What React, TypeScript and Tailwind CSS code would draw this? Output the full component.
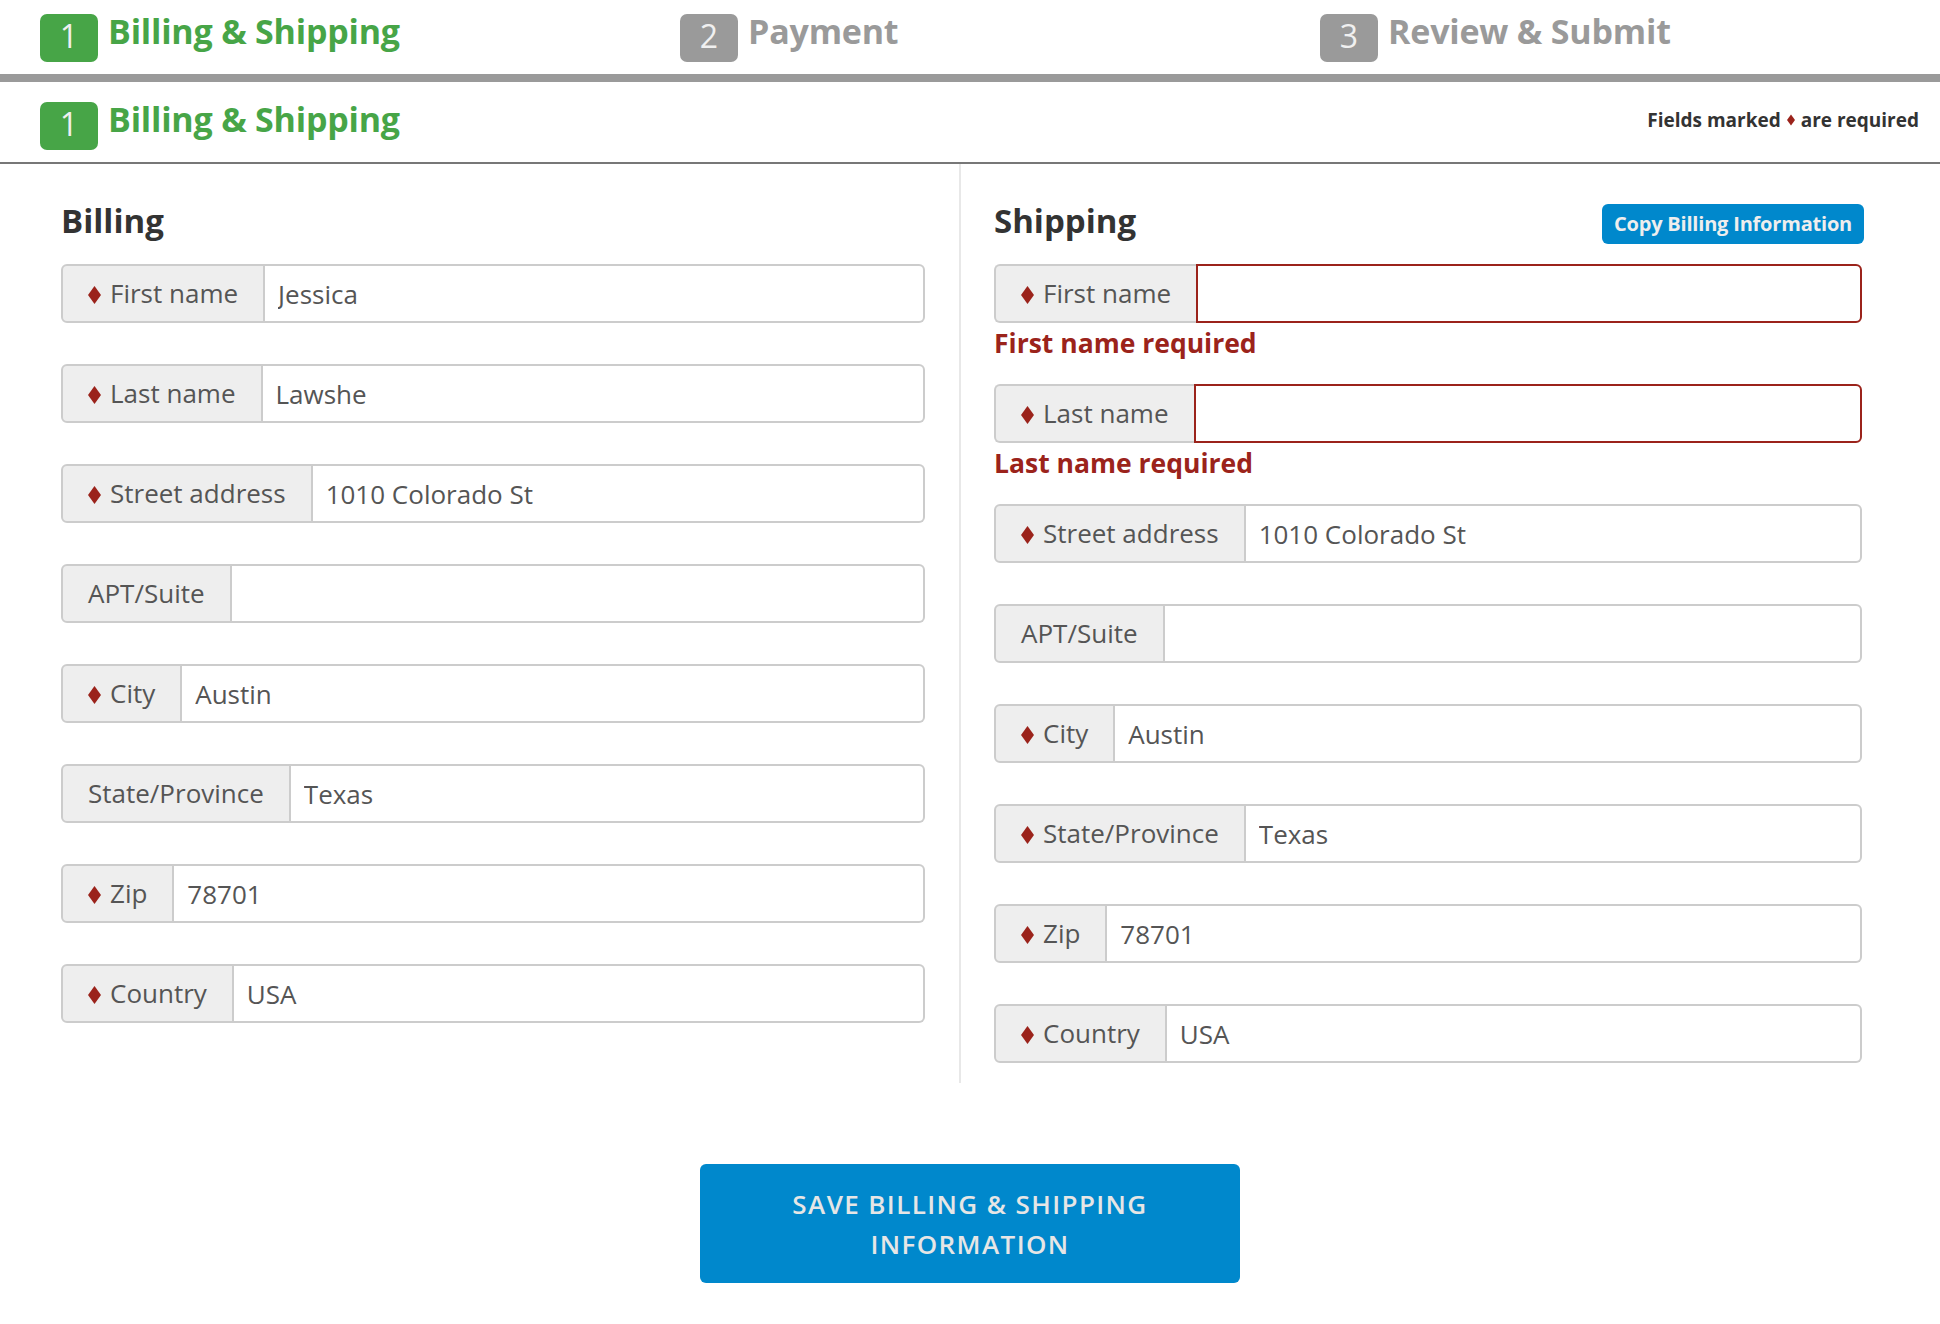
import React from "react";

type Field = { label: string; req: boolean; value: string; error?: string };

const billing: Field[] = [
  { label: "First name", req: true, value: "Jessica" },
  { label: "Last name", req: true, value: "Lawshe" },
  { label: "Street address", req: true, value: "1010 Colorado St" },
  { label: "APT/Suite", req: false, value: "" },
  { label: "City", req: true, value: "Austin" },
  { label: "State/Province", req: false, value: "Texas" },
  { label: "Zip", req: true, value: "78701" },
  { label: "Country", req: true, value: "USA" },
];

const shipping: Field[] = [
  { label: "First name", req: true, value: "", error: "First name required" },
  { label: "Last name", req: true, value: "", error: "Last name required" },
  { label: "Street address", req: true, value: "1010 Colorado St" },
  { label: "APT/Suite", req: false, value: "" },
  { label: "City", req: true, value: "Austin" },
  { label: "State/Province", req: true, value: "Texas" },
  { label: "Zip", req: true, value: "78701" },
  { label: "Country", req: true, value: "USA" },
];

function Diamond({ w = 13, h = 18 }: { w?: number; h?: number }) {
  return (
    <svg width={w} height={h} viewBox="0 0 13 18" className="shrink-0">
      <polygon points="6.5,0 13,9 6.5,18 0,9" fill="#9b231b" />
    </svg>
  );
}

function Step({ n, label, active }: { n: number; label: string; active: boolean }) {
  return (
    <div className="flex items-start gap-[10px]">
      <div
        className={
          "w-[58px] h-[48px] rounded-[7px] flex items-center justify-center pb-[4px] text-[32px] leading-none text-[#f0f0f0] " +
          (active ? "bg-[#47a547]" : "bg-[#9a9a9a]")
        }
      >
        {n}
      </div>
      <span
        className={
          "text-[34px] font-bold leading-[34px] tracking-[-0.2px] " +
          (active ? "text-[#47a547]" : "text-[#9a9a9a]")
        }
      >
        {label}
      </span>
    </div>
  );
}

function FieldRow({ f, last }: { f: Field; last: boolean }) {
  const err = !!f.error;
  return (
    <div className={last ? "" : err ? "mb-[23px]" : "mb-[41px]"}>
      <div className="flex h-[59px]">
        <div
          className={
            "flex items-center bg-[#eeeeee] border-2 border-[#cccccc] rounded-l-[6px] pl-[25px] pr-[25px] text-[26px] text-[#555555] whitespace-nowrap " +
            (err ? "border-r-0" : "")
          }
        >
          {f.req && (
            <span className="mr-[9px] translate-y-[1px]">
              <Diamond />
            </span>
          )}
          <span>{f.label}</span>
        </div>
        <div
          className={
            "flex-1 flex items-center rounded-r-[6px] border-2 bg-white " +
            (err ? "border-[#9b231b]" : "border-l-0 border-[#cccccc]")
          }
        >
          <input
            readOnly
            value={f.value}
            className="w-full h-full bg-transparent outline-none pl-[13px] text-[26px] text-[#555555]"
          />
        </div>
      </div>
      {err && (
        <div className="mt-[2px] h-[36px] leading-[36px] text-[26.5px] font-bold text-[#9b231b]">
          {f.error}
        </div>
      )}
    </div>
  );
}

export default function App() {
  return (
    <div className="w-[1940px] min-h-[1324px] bg-white font-['Open_Sans',sans-serif]">
      {/* Steps */}
      <div className="flex h-[74px] pl-[40px] pt-[14px]">
        <div className="w-[640px]">
          <Step n={1} label="Billing & Shipping" active />
        </div>
        <div className="w-[640px]">
          <Step n={2} label="Payment" active={false} />
        </div>
        <div className="w-[600px]">
          <Step n={3} label="Review & Submit" active={false} />
        </div>
      </div>
      <div className="h-[8px] bg-[#9a9a9a]" />

      {/* Section header */}
      <div className="flex items-start justify-between h-[80px] pl-[40px] pr-[21px] pt-[20px]">
        <Step n={1} label="Billing & Shipping" active />
        <div className="mt-[6px] flex items-center text-[19px] leading-[24px] font-bold text-[#333333]">
          <span>Fields marked</span>
          <span className="mx-[6px]">
            <Diamond w={8} h={12} />
          </span>
          <span>are required</span>
        </div>
      </div>
      <div className="h-[2px] bg-[#777777]" />

      {/* Columns */}
      <div className="flex">
        <div className="w-[961px] pl-[61px] pr-[34px] pt-[37px] pb-[20px] border-r-2 border-[#e8e8e8]">
          <div className="h-[40px] mb-[23px] flex items-start">
            <h2 className="text-[33px] leading-[40px] font-bold text-[#333333]">Billing</h2>
          </div>
          {billing.map((f, i) => (
            <FieldRow key={i} f={f} last={i === billing.length - 1} />
          ))}
        </div>
        <div className="w-[901px] pl-[33px] pt-[37px] pb-[20px]">
          <div className="h-[40px] mb-[23px] flex items-start justify-between">
            <h2 className="text-[33px] leading-[40px] font-bold text-[#333333]">Shipping</h2>
            <button className="mt-[3px] -mr-[2px] h-[40px] w-[262px] rounded-[6px] bg-[#0088cc] text-[20px] font-bold text-[#eeeeee] leading-none tracking-[-0.2px]">
              Copy Billing Information
            </button>
          </div>
          {shipping.map((f, i) => (
            <FieldRow key={i} f={f} last={i === shipping.length - 1} />
          ))}
        </div>
      </div>

      {/* Save */}
      <div className="flex justify-center mt-[81px]">
        <button className="w-[540px] h-[119px] rounded-[6px] bg-[#0088cc] text-[#e6e6e6] text-[26px] font-semibold leading-[40px] tracking-[1.4px] uppercase">
          <span className="block">Save Billing &amp; Shipping</span>
          <span className="block">Information</span>
        </button>
      </div>
    </div>
  );
}
